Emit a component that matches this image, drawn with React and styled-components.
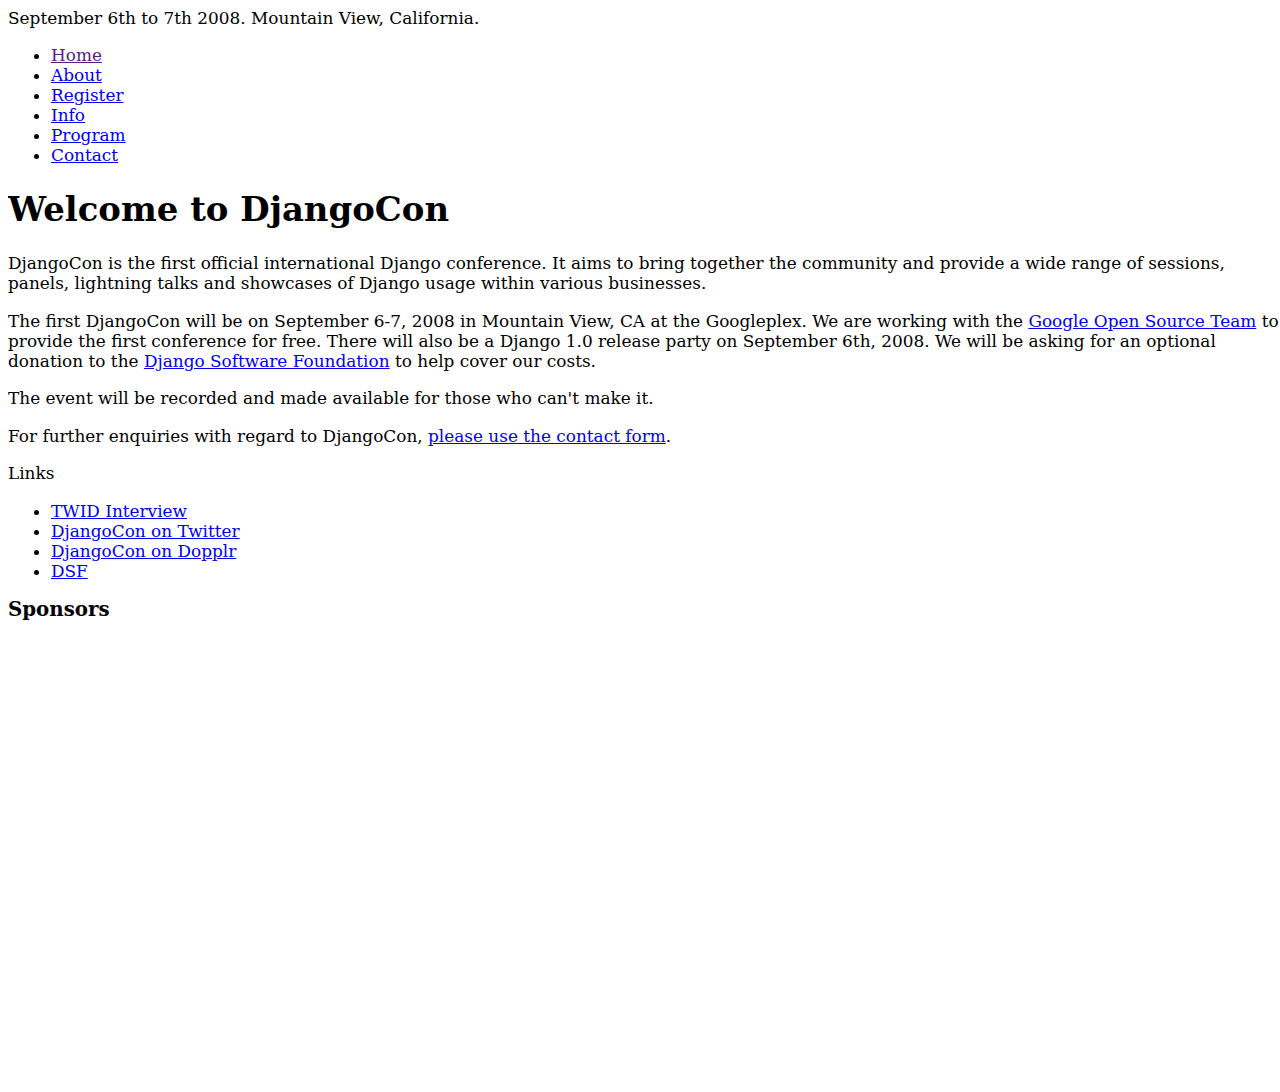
import styled, { createGlobalStyle } from "styled-components"

const GlobalStyle = createGlobalStyle`
html{
overflow-x:hidden;
}
body{
margin:8px;
width:1276px;
font-family:"DejaVu Serif", serif;
font-size:16.9px;
line-height:20px;
color:#000;
background:#fff;
}
`
const Dates = styled.div``
const Nav = styled.ul`
margin:17px 0 17.5px;
padding-left:43px;
`
const Item = styled.li``
const Link = styled.a`
color:${p => (p.$visited ? "#551a8b" : "#0000ee")};
text-decoration:underline;
`
const Title = styled.h1`
font-size:33.9px;
line-height:40px;
font-weight:bold;
margin:24px 0;
`
const Para = styled.p`
margin:17.5px 0;
`
const SubTitle = styled.h3`
font-size:19.8px;
line-height:23px;
font-weight:bold;
margin:17px 0;
`

const nav = ["Home", "About", "Register", "Info", "Program", "Contact"]
const links = ["TWID Interview", "DjangoCon on Twitter", "DjangoCon on Dopplr", "DSF"]

const App = () => {
  return (
    <>
      <GlobalStyle />
      <Dates>September 6th to 7th 2008. Mountain View, California.</Dates>
      <Nav>
        {nav.map((n, i) => (
          <Item key={n}>
            <Link href="#" $visited={i === 0}>{n}</Link>
          </Item>
        ))}
      </Nav>
      <Title>Welcome to DjangoCon</Title>
      <Para>
        DjangoCon is the first official international Django conference. It aims to bring together the community and provide a wide range of sessions, panels, lightning talks and showcases of Django usage within various businesses.
      </Para>
      <Para>
        The first DjangoCon will be on September 6-7, 2008 in Mountain View, CA at the Googleplex. We are working with the <Link href="#">Google Open Source Team</Link> to provide the first conference for free. There will also be a Django 1.0 release party on September 6th, 2008. We will be asking for an optional donation to the <Link href="#">Django Software Foundation</Link> to help cover our costs.
      </Para>
      <Para>The event will be recorded and made available for those who can't make it.</Para>
      <Para>
        For further enquiries with regard to DjangoCon, <Link href="#">please use the contact form</Link>.
      </Para>
      <Para>Links</Para>
      <Nav>
        {links.map(l => (
          <Item key={l}>
            <Link href="#">{l}</Link>
          </Item>
        ))}
      </Nav>
      <SubTitle>Sponsors</SubTitle>
    </>
  )
}

export default App
